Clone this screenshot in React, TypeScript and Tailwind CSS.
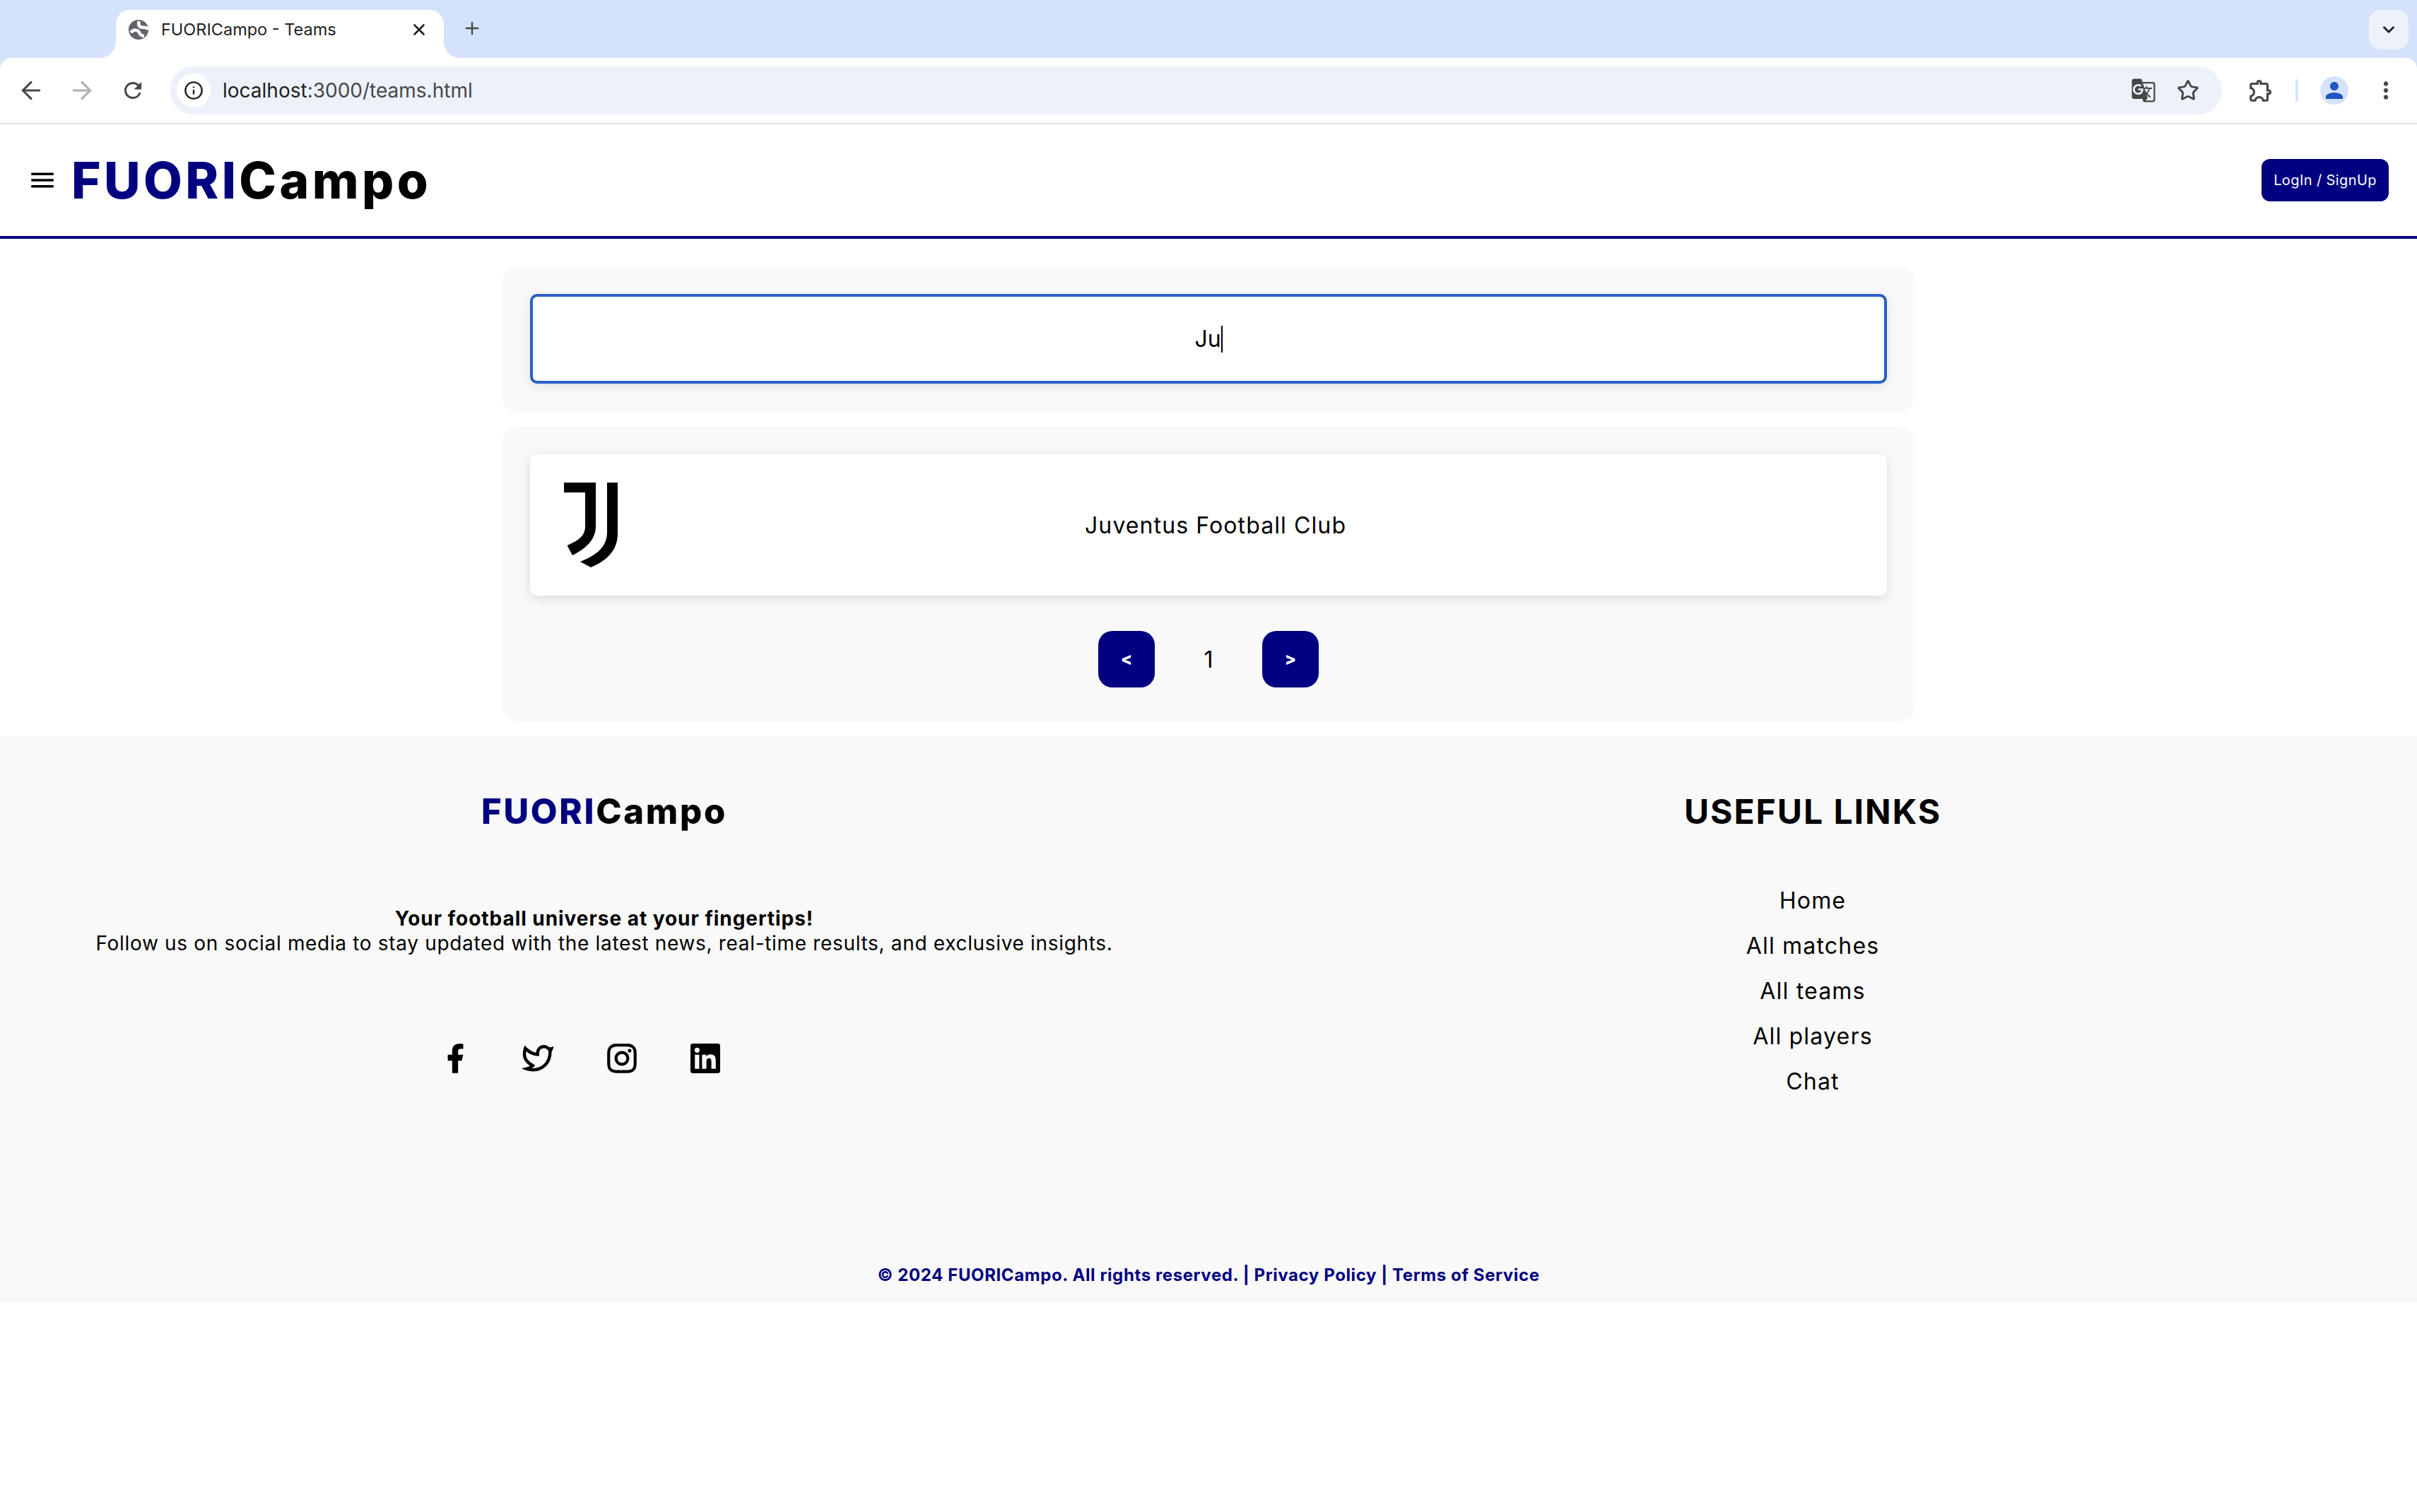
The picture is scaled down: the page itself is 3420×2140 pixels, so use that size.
import { ArrowLeft, ArrowRight, ChevronDown, Info, Plus, Star, X } from 'lucide-react';
import { RiFacebookFill, RiInstagramLine, RiLinkedinBoxFill, RiTwitterLine } from 'react-icons/ri';
import { MdGTranslate, MdMenu, MdMoreVert, MdOutlineExtension, MdPerson, MdRefresh } from 'react-icons/md';

const links = ['Home', 'All matches', 'All teams', 'All players', 'Chat'];

function BrowserChrome() {
    return (
        <div className="font-['Inter',sans-serif]">
            {/* tab strip */}
            <div className="h-[82px] bg-[#d5e2fb] flex items-start pl-[164px] pt-[14px]">
                <div className="relative w-[464px] h-[68px] bg-white rounded-t-[20px] flex items-center pl-[18px] pr-[22px] pb-[12px]">
                    <svg className="absolute left-[-24px] bottom-0" width="24" height="24" viewBox="0 0 24 24">
                        <path d="M24 0V24H0C14 24 24 14 24 0Z" fill="#ffffff" />
                    </svg>
                    <svg className="absolute right-[-24px] bottom-0" width="24" height="24" viewBox="0 0 24 24">
                        <path d="M0 0V24H24C10 24 0 14 0 0Z" fill="#ffffff" />
                    </svg>
                    {/* default globe favicon */}
                    <svg width="28" height="28" viewBox="0 0 28 28">
                        <circle cx="14" cy="14" r="14" fill="#5f6368" />
                        <path d="M3 18C8 13 13 14 15 18C16 21 19 23 22 23" fill="none" stroke="#ffffff" strokeWidth="4.5" />
                        <path d="M15 2C13 7 15 10 18 10.500C21 11 24 10 28 13" fill="none" stroke="#ffffff" strokeWidth="4.5" />
                    </svg>
                    <span className="ml-[18px] text-[23.5px] text-[#1f1f1f]">FUORICampo - Teams</span>
                    <X size={26} strokeWidth={2.4} className="ml-auto text-[#1f1f1f]" />
                </div>
                <Plus size={28} strokeWidth={2} className="ml-[26px] mt-[12px] text-[#444746]" />
                <div className="ml-auto mr-[12px] w-[56px] h-[56px] rounded-[16px] bg-[#edf2fa] flex items-center justify-center">
                    <ChevronDown size={26} strokeWidth={2.6} className="text-[#1f1f1f]" />
                </div>
            </div>
            {/* toolbar */}
            <div className="relative h-[94px] bg-white border-b-2 border-[#e0e0e0] flex items-center">
                <div className="absolute left-0 top-0 w-[16px] h-[16px] bg-[#d5e2fb]">
                    <div className="w-full h-full bg-white rounded-tl-[16px]" />
                </div>
                <div className="absolute right-0 top-0 w-[16px] h-[16px] bg-[#d5e2fb]">
                    <div className="w-full h-full bg-white rounded-tr-[16px]" />
                </div>
                <ArrowLeft size={40} strokeWidth={1.9} className="ml-[24px] text-[#474747]" />
                <ArrowRight size={40} strokeWidth={1.9} className="ml-[32px] text-[#b0b0b0]" />
                <MdRefresh size={36} className="ml-[34px] text-[#474747]" />
                <div className="ml-[34px] w-[2904px] h-[68px] rounded-full bg-[#edf2fa] flex items-center pl-[10px] pr-[32px]">
                    <div className="w-[48px] h-[48px] rounded-full bg-white flex items-center justify-center">
                        <Info size={28} strokeWidth={2} className="text-[#1f1f1f]" />
                    </div>
                    <span className="ml-[17px] text-[28px] text-[#1f1f1f]">
                        localhost<span className="text-[#474747]">:3000/teams.html</span>
                    </span>
                    <MdGTranslate size={36} className="ml-auto text-[#474747]" />
                    <Star size={32} strokeWidth={2.2} className="ml-[29px] text-[#474747]" />
                </div>
                <MdOutlineExtension size={38} className="ml-[36px] text-[#474747]" />
                <div className="ml-[30px] w-[4px] h-[32px] rounded-full bg-[#d5e2fb]" />
                <div className="ml-[31px] w-[40px] h-[40px] rounded-full bg-[#d5e2fb] flex items-center justify-center">
                    <MdPerson size={36} className="text-[#1f55c4] shrink-0" />
                </div>
                <MdMoreVert size={38} className="ml-[34px] text-[#474747]" />
            </div>
        </div>
    );
}

function Logo({ className }: { className: string }) {
    return (
        <span className={className}>
            <span className="text-[#000080]">FUORI</span>
            <span className="text-black">Campo</span>
        </span>
    );
}

function JuveLogo() {
    return (
        <svg width="76" height="121" viewBox="0 0 76 121" fill="#000000">
            <path d="M0 0H45V62C45 80 32 93 12 103L4.6 89C20 82 30 76 30 62V14H0Z" />
            <path d="M61 0H76V72C76 95 62 110 38 120L23 112C45 103 61 92 61 70Z" />
        </svg>
    );
}

export default function App() {
    return (
        <div className="min-h-[2140px] bg-white font-['Inter',sans-serif] text-black">
            <BrowserChrome />

            <header className="h-[162px] border-b-4 border-[#000080] flex items-center pl-[39px] pr-[40px]">
                <MdMenu size={42} className="text-black" />
                <Logo className="ml-[20px] text-[71px] leading-none font-extrabold tracking-[4.4px]" />
                <button className="ml-auto w-[180px] h-[60px] rounded-[12px] bg-[#000080] text-white text-[20px] tracking-[0.4px]">
                    LogIn / SignUp
                </button>
            </header>

            <main className="w-[2000px] mx-auto pt-[38px] pb-[21px] flex flex-col gap-[20px]">
                <section className="bg-[#f9f9f9] rounded-[24px] p-[40px]">
                    <div className="h-[127px] bg-white border-4 border-[#2a5fc9] rounded-[10px] shadow-[0_4px_16px_rgba(0,0,0,0.1)] flex items-center justify-center text-[32px]">
                        <span>Ju</span>
                        <span className="w-[2px] h-[38px] bg-black" />
                    </div>
                </section>

                <section className="bg-[#f9f9f9] rounded-[24px] px-[40px] pt-[40px] pb-[49px]">
                    <div className="h-[200px] bg-white rounded-[10px] shadow-[0_4px_16px_rgba(0,0,0,0.12)] flex items-center pl-[48px]">
                        <JuveLogo />
                        <span className="ml-[661px] pt-[2px] text-[32px] tracking-[1.1px]">Juventus Football Club</span>
                    </div>
                    <div className="mt-[50px] flex items-center justify-center">
                        <button className="w-[80px] h-[80px] rounded-[20px] bg-[#000080] text-white text-[24px] font-extrabold">&lt;</button>
                        <span className="w-[152px] pt-[2px] text-center text-[32px]">1</span>
                        <button className="w-[80px] h-[80px] rounded-[20px] bg-[#000080] text-white text-[24px] font-extrabold">&gt;</button>
                    </div>
                </section>
            </main>

            <footer className="h-[800px] bg-[#f9f9f9] flex flex-col pt-[77px]">
                <div className="grid grid-cols-2">
                    <div className="flex flex-col items-center">
                        <Logo className="text-[49px] leading-[58px] font-extrabold tracking-[2.7px]" />
                        <p className="mt-[105px] text-center text-[28px] leading-[35px] tracking-[0.67px]">
                            <strong className="font-bold tracking-[0.95px]">Your football universe at your fingertips!</strong>
                            <br />
                            Follow us on social media to stay updated with the latest news, real-time results, and exclusive insights.
                        </p>
                        <div className="mt-[124px] ml-[-68px] flex gap-[76px] text-black">
                            <span className="w-[42px] h-[42px] flex items-center justify-center"><RiFacebookFill size={50} className="shrink-0" /></span>
                            <span className="w-[42px] h-[42px] flex items-center justify-center"><RiTwitterLine size={54} className="shrink-0" /></span>
                            <span className="w-[42px] h-[42px] flex items-center justify-center"><RiInstagramLine size={50} className="shrink-0" /></span>
                            <span className="w-[42px] h-[42px] flex items-center justify-center"><RiLinkedinBoxFill size={56} className="shrink-0" /></span>
                        </div>
                    </div>
                    <div className="flex flex-col items-center">
                        <h3 className="text-[48px] leading-[58px] font-bold tracking-[2px]">USEFUL LINKS</h3>
                        <ul className="mt-[65px] flex flex-col items-center text-[32px] leading-[64px] tracking-[1.2px]">
                            {links.map((l) => (
                                <li key={l}>{l}</li>
                            ))}
                        </ul>
                    </div>
                </div>
                <p className="mt-auto mb-[24px] text-center text-[24px] leading-[29px] font-bold text-[#000080] tracking-[0.6px]">
                    © 2024 FUORICampo. All rights reserved. | Privacy Policy | Terms of Service
                </p>
            </footer>
        </div>
    );
}
